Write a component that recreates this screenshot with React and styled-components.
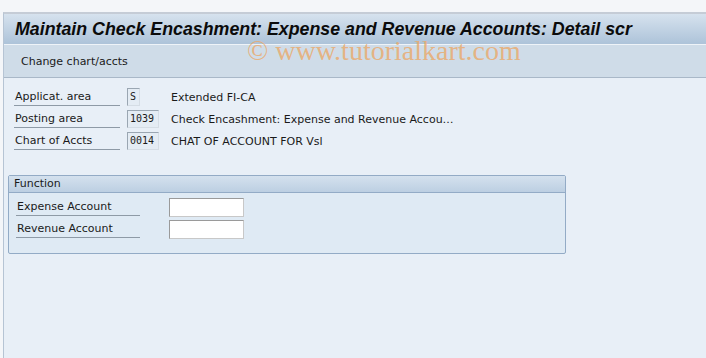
import styled, { createGlobalStyle } from 'styled-components';

const GlobalStyle = createGlobalStyle`
  html, body {
    margin: 0;
    padding: 0;
    background: #f4f6f9;
  }
  body {
    font-family: Tahoma, "DejaVu Sans", "Liberation Sans", sans-serif;
  }
`;

const Screen = styled.div`
  position: relative;
  width: 706px;
  height: 358px;
  overflow: hidden;
  background: #f4f6f9;
  padding-top: 12px;
  box-sizing: border-box;
`;

const Frame = styled.div`
  margin-left: 3px;
  height: 346px;
  border-top: 2px solid #c5ccd6;
  border-left: 1px solid #b6c4d4;
  background: #e8eff7;
  display: flex;
  flex-direction: column;
`;

const TitleBar = styled.div`
  height: 30px;
  display: flex;
  align-items: center;
  padding-left: 11px;
  background: linear-gradient(#d6e2ee, #adc3d9);
  border-bottom: 1px solid #eef3f8;
`;

const Title = styled.h1`
  margin: 0;
  font-family: "Liberation Sans", Arial, sans-serif;
  font-size: 17.8px;
  font-weight: bold;
  font-style: italic;
  color: #0b0b0b;
  white-space: nowrap;
`;

const Toolbar = styled.div`
  height: 32px;
  display: flex;
  align-items: center;
  padding-left: 17px;
  background: #cfdce8;
  border-bottom: 1px solid #a9b8c8;
`;

const ToolButton = styled.span`
  font-family: "DejaVu Sans", sans-serif;
  font-size: 11px;
  color: #1a1a1a;
`;

const Header = styled.div`
  padding: 10px 0 0 10px;
  display: flex;
  flex-direction: column;
  gap: 4px;
`;

const Row = styled.div`
  display: flex;
  align-items: center;
  height: 18px;
`;

const Label = styled.div`
  width: ${(p) => p.$width}px;
  height: 18px;
  line-height: 17px;
  padding-left: 1px;
  box-sizing: border-box;
  font-family: "DejaVu Sans", sans-serif;
  font-size: 11px;
  color: #1a1a1a;
  border-bottom: 1px solid #8e9aa6;
  white-space: nowrap;
`;

const Output = styled.div`
  margin-left: ${(p) => p.$gap}px;
  width: ${(p) => p.$width}px;
  height: 18px;
  box-sizing: border-box;
  border: 1px solid #9aa6b2;
  border-right-color: #d5dde5;
  border-bottom-color: #d5dde5;
  background: #e4ecf4;
  font-family: "DejaVu Sans Mono", monospace;
  font-size: 10px;
  line-height: 16px;
  padding-left: 2px;
  color: #1a1a1a;
`;

const Text = styled.div`
  margin-left: ${(p) => p.$gap}px;
  font-family: "DejaVu Sans", sans-serif;
  font-size: 11px;
  color: #1a1a1a;
  white-space: nowrap;
`;

const Group = styled.div`
  margin: 25px 0 0 4px;
  width: 558px;
  height: 79px;
  box-sizing: border-box;
  border: 1px solid #93abc6;
  border-radius: 2px;
  background: #dfeaf4;
`;

const GroupHeader = styled.div`
  height: 16px;
  line-height: 15px;
  padding-left: 5px;
  background: linear-gradient(#d4e1ee, #bccfe2);
  border-bottom: 1px solid #93abc6;
  font-family: "DejaVu Sans", sans-serif;
  font-size: 11px;
  color: #1a1a1a;
`;

const GroupBody = styled.div`
  padding: 5px 0 0 7px;
  display: flex;
  flex-direction: column;
  gap: 4px;
`;

const Input = styled.div`
  margin-left: ${(p) => p.$gap}px;
  width: 75px;
  height: 19px;
  box-sizing: border-box;
  border: 1px solid #9a9a9a;
  border-right-color: #c8c8c8;
  border-bottom-color: #c8c8c8;
  background: #ffffff;
`;

const Watermark = styled.div`
  position: absolute;
  left: 247px;
  top: 37px;
  line-height: 28px;
  font-family: "Liberation Serif", serif;
  font-size: 28px;
  color: rgba(234, 168, 104, 0.8);
  white-space: nowrap;
  pointer-events: none;
`;

const headerRows = [
  { label: 'Applicat. area', value: 'S', width: 13, text: 'Extended FI-CA', gap: 31 },
  { label: 'Posting area', value: '1039', width: 32, text: 'Check Encashment: Expense and Revenue Accou…', gap: 12 },
  { label: 'Chart of Accts', value: '0014', width: 32, text: 'CHAT OF ACCOUNT FOR Vsl', gap: 12 },
];

export default function App() {
  return (
    <>
      <GlobalStyle />
      <Screen>
        <Frame>
          <TitleBar>
            <Title>Maintain Check Encashment: Expense and Revenue Accounts: Detail scr</Title>
          </TitleBar>
          <Toolbar>
            <ToolButton>Change chart/accts</ToolButton>
          </Toolbar>
          <Header>
            {headerRows.map((r) => (
              <Row key={r.label}>
                <Label $width={106}>{r.label}</Label>
                <Output $gap={7} $width={r.width}>{r.value}</Output>
                <Text $gap={r.gap}>{r.text}</Text>
              </Row>
            ))}
          </Header>
          <Group>
            <GroupHeader>Function</GroupHeader>
            <GroupBody>
              <Row>
                <Label $width={124}>Expense Account</Label>
                <Input $gap={29} />
              </Row>
              <Row>
                <Label $width={124}>Revenue Account</Label>
                <Input $gap={29} />
              </Row>
            </GroupBody>
          </Group>
        </Frame>
        <Watermark>© www.tutorialkart.com</Watermark>
      </Screen>
    </>
  );
}
